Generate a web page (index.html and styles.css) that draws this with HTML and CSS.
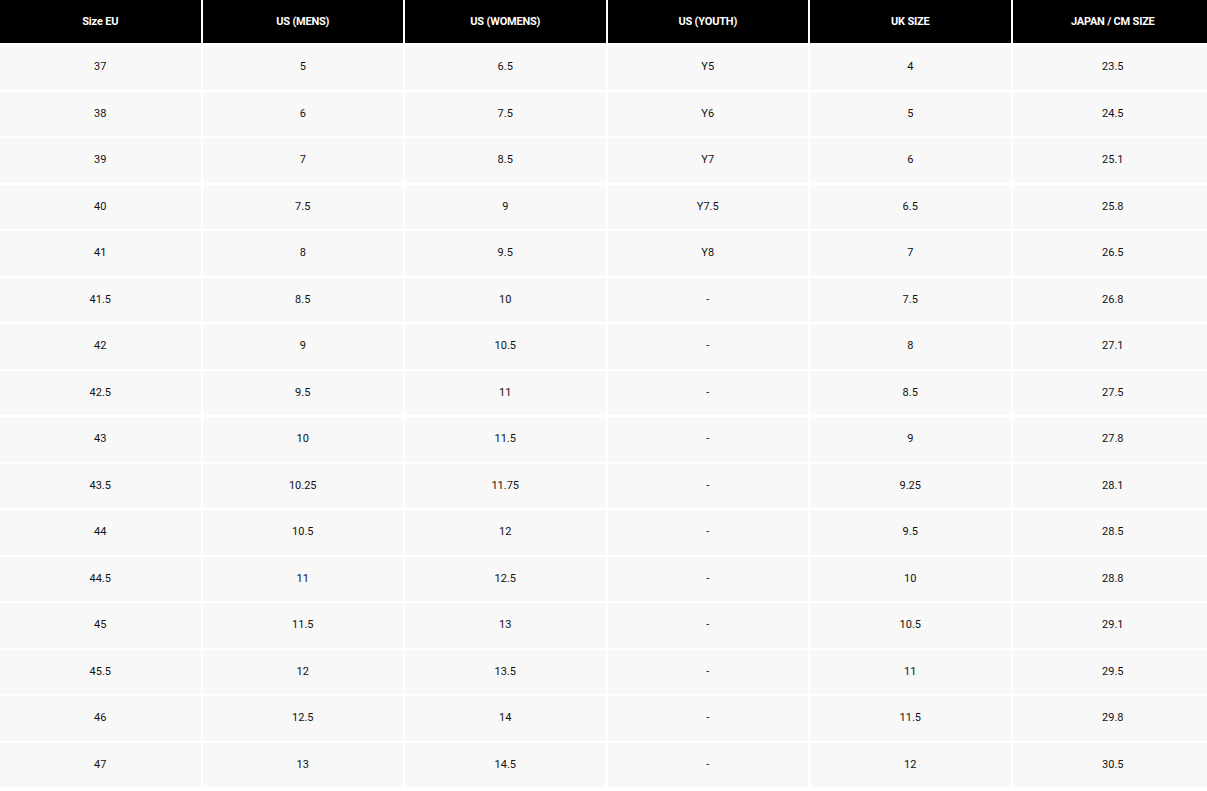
FILE: index.html
```html
<!DOCTYPE html>
<html lang="en">
<head>
<meta charset="utf-8">
<title>Size chart</title>
<link rel="stylesheet" href="styles.css">
</head>
<body>
<table class="size-table">
  <thead>
    <tr><th>Size EU</th><th>US (MENS)</th><th>US (WOMENS)</th><th>US (YOUTH)</th><th>UK SIZE</th><th>JAPAN / CM SIZE</th></tr>
  </thead>
  <tbody>
    <tr><td>37</td><td>5</td><td>6.5</td><td>Y5</td><td>4</td><td>23.5</td></tr>
    <tr><td>38</td><td>6</td><td>7.5</td><td>Y6</td><td>5</td><td>24.5</td></tr>
    <tr><td>39</td><td>7</td><td>8.5</td><td>Y7</td><td>6</td><td>25.1</td></tr>
    <tr><td>40</td><td>7.5</td><td>9</td><td>Y7.5</td><td>6.5</td><td>25.8</td></tr>
    <tr><td>41</td><td>8</td><td>9.5</td><td>Y8</td><td>7</td><td>26.5</td></tr>
    <tr><td>41.5</td><td>8.5</td><td>10</td><td>-</td><td>7.5</td><td>26.8</td></tr>
    <tr><td>42</td><td>9</td><td>10.5</td><td>-</td><td>8</td><td>27.1</td></tr>
    <tr><td>42.5</td><td>9.5</td><td>11</td><td>-</td><td>8.5</td><td>27.5</td></tr>
    <tr><td>43</td><td>10</td><td>11.5</td><td>-</td><td>9</td><td>27.8</td></tr>
    <tr><td>43.5</td><td>10.25</td><td>11.75</td><td>-</td><td>9.25</td><td>28.1</td></tr>
    <tr><td>44</td><td>10.5</td><td>12</td><td>-</td><td>9.5</td><td>28.5</td></tr>
    <tr><td>44.5</td><td>11</td><td>12.5</td><td>-</td><td>10</td><td>28.8</td></tr>
    <tr><td>45</td><td>11.5</td><td>13</td><td>-</td><td>10.5</td><td>29.1</td></tr>
    <tr><td>45.5</td><td>12</td><td>13.5</td><td>-</td><td>11</td><td>29.5</td></tr>
    <tr><td>46</td><td>12.5</td><td>14</td><td>-</td><td>11.5</td><td>29.8</td></tr>
    <tr><td>47</td><td>13</td><td>14.5</td><td>-</td><td>12</td><td>30.5</td></tr>
  </tbody>
</table>
</body>
</html>
```
FILE: styles.css
```css
html, body {
  margin: 0;
  padding: 0;
  background: #fff;
  overflow: hidden;
}
body {
  font-family: Roboto, "Liberation Sans", sans-serif;
  font-size: 11px;
  color: #111;
}
.size-table {
  width: 1217px;
  margin: -2px 0 0 -2px;
  border-collapse: separate;
  border-spacing: 2px;
  table-layout: fixed;
}
.size-table th {
  background: #000;
  color: #fff;
  font-weight: 700;
  font-size: 11px;
  height: 43px;
  padding: 0;
  text-align: center;
  vertical-align: middle;
  letter-spacing: -0.2px;
}
.size-table td {
  background: #f8f8f8;
  height: 44.5px;
  padding: 0 0 1px;
  text-align: center;
  vertical-align: middle;
  box-sizing: border-box;
}
```
